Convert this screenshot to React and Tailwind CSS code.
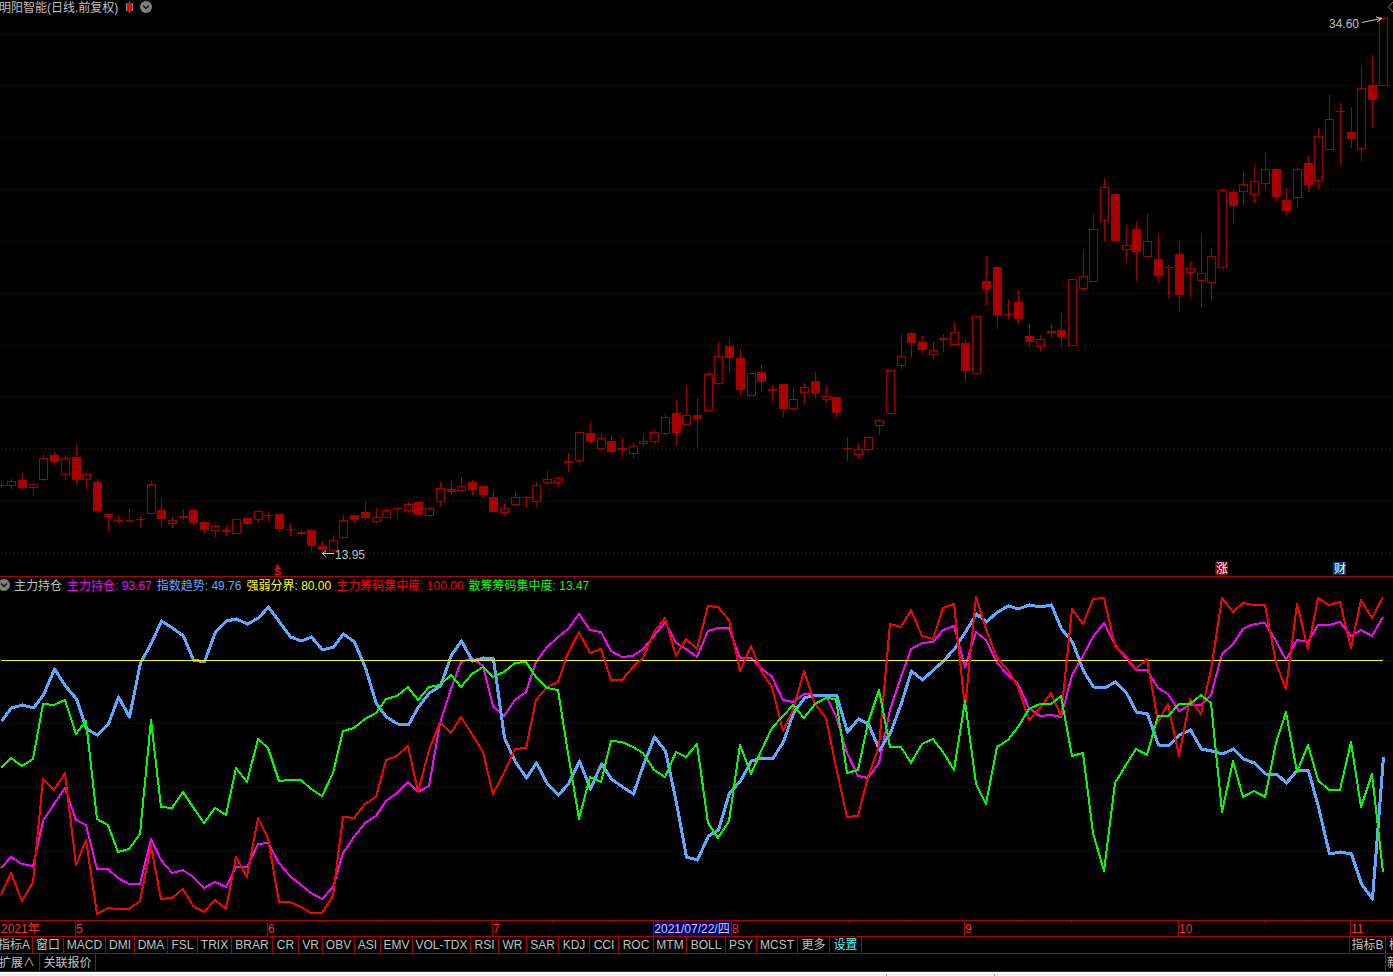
import React, { useState } from 'react';
import clsx from 'clsx';

const WIDTH = 1393;
const RED = '#a80000';

const barX = (i) => Math.floor(1 + i * 10.715);

// [high, bodyTop, bodyBottom, low, filled]
const CANDLES = [
    [481, 485, 486, 488, 1], [479, 481, 486, 489, 0], [473, 480, 488, 489, 1], [483, 484, 488, 496, 0], [455, 458, 480, 481, 0],
    [452, 455, 462, 466, 1], [455, 458, 475, 480, 0], [445, 457, 480, 485, 1], [473, 474, 480, 490, 0], [479, 482, 511, 513, 1],
    [513, 514, 517, 531, 0], [516, 520, 521, 524, 1], [509, 520, 521, 522, 1], [516, 519, 520, 528, 1], [481, 484, 514, 514, 0],
    [498, 510, 519, 526, 1], [517, 520, 524, 528, 0], [509, 516, 518, 520, 1], [508, 510, 523, 526, 1], [521, 522, 530, 534, 1],
    [524, 526, 531, 538, 0], [526, 530, 532, 536, 1], [519, 519, 534, 534, 0], [518, 518, 524, 526, 1], [510, 511, 520, 523, 0],
    [512, 515, 516, 522, 1], [514, 514, 529, 532, 1], [524, 529, 530, 536, 1], [529, 532, 534, 535, 1], [529, 530, 546, 551, 1],
    [541, 546, 550, 552, 1], [535, 540, 551, 552, 0], [515, 520, 538, 539, 0], [515, 515, 520, 523, 1], [502, 512, 518, 520, 1],
    [508, 517, 522, 523, 0], [508, 510, 518, 518, 0], [508, 508, 509, 518, 1], [502, 504, 511, 513, 0], [502, 502, 515, 516, 1],
    [507, 508, 516, 517, 0], [482, 488, 502, 506, 0], [480, 489, 492, 495, 1], [477, 486, 491, 491, 0], [480, 482, 490, 495, 1],
    [486, 486, 495, 499, 1], [491, 497, 512, 513, 1], [504, 508, 513, 516, 0], [491, 497, 505, 505, 0], [496, 497, 498, 508, 1],
    [482, 485, 502, 506, 0], [471, 479, 483, 485, 0], [477, 478, 483, 487, 0], [453, 461, 463, 472, 1], [432, 432, 461, 465, 0],
    [422, 433, 442, 443, 1], [433, 438, 449, 451, 0], [436, 441, 452, 453, 1], [438, 448, 450, 457, 1], [443, 446, 454, 458, 0],
    [434, 441, 444, 446, 0], [430, 432, 442, 444, 0], [414, 417, 434, 436, 0], [400, 413, 433, 446, 1], [386, 415, 425, 425, 0],
    [398, 415, 419, 448, 1], [372, 374, 411, 411, 0], [342, 356, 384, 385, 0], [338, 346, 358, 373, 1], [349, 358, 390, 396, 1],
    [373, 373, 396, 396, 0], [365, 372, 382, 391, 1], [385, 389, 391, 401, 1], [384, 384, 409, 417, 1], [387, 399, 409, 410, 0],
    [383, 387, 393, 404, 0], [372, 381, 393, 399, 1], [386, 396, 400, 403, 0], [397, 397, 413, 418, 1], [437, 448, 449, 461, 1],
    [444, 449, 455, 459, 0], [436, 437, 450, 452, 0], [420, 420, 426, 435, 0], [370, 370, 414, 414, 0], [334, 356, 366, 370, 0],
    [332, 333, 343, 358, 1], [336, 342, 350, 354, 1], [341, 350, 355, 359, 0], [334, 338, 340, 352, 1], [322, 332, 345, 345, 0],
    [339, 343, 371, 381, 1], [316, 316, 374, 375, 0], [256, 281, 289, 306, 1], [267, 267, 315, 329, 1], [299, 314, 315, 319, 1],
    [290, 302, 319, 324, 1], [324, 336, 342, 347, 1], [335, 339, 347, 351, 0], [324, 331, 333, 338, 1], [313, 330, 337, 347, 1],
    [279, 279, 346, 346, 0], [250, 276, 289, 292, 0], [214, 229, 282, 282, 0], [178, 187, 221, 241, 0], [193, 194, 241, 241, 1],
    [226, 245, 250, 262, 0], [221, 229, 252, 281, 1], [214, 241, 257, 257, 0], [234, 259, 276, 282, 1], [265, 267, 268, 298, 1],
    [241, 254, 295, 311, 1], [262, 268, 273, 297, 0], [234, 273, 281, 307, 0], [248, 256, 283, 301, 0], [189, 190, 268, 269, 0],
    [189, 192, 206, 223, 1], [171, 184, 192, 204, 0], [166, 181, 195, 203, 0], [152, 169, 184, 190, 0], [169, 169, 197, 202, 1],
    [188, 200, 211, 215, 1], [167, 169, 198, 208, 0], [156, 163, 185, 192, 1], [128, 136, 181, 189, 0], [95, 119, 150, 150, 0],
    [103, 111, 112, 166, 1], [107, 132, 139, 148, 1], [66, 88, 149, 161, 0], [55, 85, 100, 127, 1], [18, 18, 86, 86, 0],
];

const MAIN_FORCE = [
    868, 857, 864, 866, 821, 804, 788, 820, 825, 869, 869, 878, 884, 884, 839, 860, 873, 870, 877, 888,
    882, 887, 867, 867, 844, 843, 863, 876, 885, 893, 899, 887, 853, 837, 823, 816, 801, 793, 782, 792,
    786, 723, 689, 662, 658, 666, 706, 716, 700, 692, 662, 647, 637, 629, 614, 630, 632, 651, 657, 656,
    649, 636, 622, 643, 649, 657, 631, 628, 628, 658, 658, 668, 677, 700, 702, 694, 695, 696, 716, 753,
    776, 778, 763, 710, 677, 649, 643, 642, 630, 626, 667, 632, 640, 663, 675, 684, 708, 716, 715, 717,
    675, 656, 637, 623, 645, 658, 670, 670, 688, 694, 711, 705, 705, 695, 654, 644, 629, 624, 623, 641,
    660, 640, 642, 625, 625, 622, 636, 630, 636, 617,
];

const TREND = [
    721, 708, 705, 708, 695, 669, 686, 699, 729, 735, 724, 697, 717, 663, 643, 621, 628, 636, 660, 662,
    632, 621, 619, 624, 618, 607, 622, 637, 641, 637, 650, 647, 634, 642, 668, 704, 717, 724, 725, 707,
    693, 686, 655, 641, 661, 658, 659, 738, 762, 778, 763, 784, 795, 784, 761, 789, 764, 779, 787, 794,
    765, 737, 751, 803, 857, 860, 836, 830, 793, 781, 761, 758, 759, 742, 713, 698, 695, 695, 695, 732,
    719, 724, 750, 733, 703, 671, 680, 670, 661, 649, 632, 614, 622, 612, 606, 609, 605, 607, 605, 629,
    642, 671, 687, 688, 682, 693, 712, 714, 745, 746, 735, 730, 749, 751, 754, 749, 759, 763, 774, 774,
    783, 770, 771, 807, 854, 852, 854, 884, 899, 757,
];

const MAIN_CHIPS = [
    895, 873, 901, 882, 779, 790, 773, 865, 840, 914, 908, 909, 909, 901, 846, 899, 898, 889, 906, 912,
    900, 909, 857, 877, 818, 838, 902, 902, 907, 913, 913, 896, 817, 818, 804, 797, 760, 756, 746, 792,
    750, 722, 733, 717, 734, 752, 794, 773, 749, 748, 700, 687, 682, 653, 632, 653, 649, 680, 680, 667,
    658, 632, 618, 656, 639, 649, 606, 607, 620, 671, 646, 671, 687, 731, 710, 671, 704, 718, 767, 817,
    816, 777, 746, 624, 627, 610, 636, 639, 608, 604, 708, 597, 629, 658, 670, 687, 720, 708, 693, 716,
    609, 624, 599, 598, 646, 656, 669, 659, 722, 704, 756, 699, 714, 670, 598, 612, 603, 605, 605, 663,
    689, 604, 649, 598, 605, 602, 648, 600, 618, 597,
];

const RETAIL_CHIPS = [
    768, 758, 766, 759, 704, 705, 700, 734, 721, 819, 825, 852, 849, 834, 720, 807, 808, 792, 807, 823,
    808, 815, 768, 782, 739, 748, 781, 780, 780, 789, 796, 773, 731, 728, 719, 713, 699, 696, 687, 700,
    687, 685, 675, 687, 674, 667, 677, 672, 663, 662, 677, 688, 690, 753, 819, 777, 782, 741, 742, 747,
    753, 770, 777, 752, 757, 744, 823, 838, 821, 745, 774, 751, 728, 716, 705, 718, 704, 698, 699, 773,
    770, 723, 690, 747, 747, 763, 744, 739, 752, 770, 701, 784, 804, 747, 740, 727, 709, 704, 704, 696,
    756, 753, 833, 871, 783, 765, 749, 755, 716, 716, 704, 704, 695, 703, 812, 761, 797, 791, 797, 743,
    712, 772, 745, 780, 790, 790, 742, 807, 774, 872,
];

const LEGEND = [
    { label: '主力持仓', value: '93.67', color: 'text-[#ff00ff]' },
    { label: '指数趋势', value: '49.76', color: 'text-[#60a8ff]' },
    { label: '强弱分界', value: '80.00', color: 'text-[#ffff00]' },
    { label: '主力筹码集中度', value: '100.00', color: 'text-[#ff0000]' },
    { label: '散筹筹码集中度', value: '13.47', color: 'text-[#00ff00]' },
];

// span is the share of the axis that the month takes
const MONTHS = [
    { label: '5', span: 192 },
    { label: '6', span: 225 },
    { label: '7', span: 239 },
    { label: '8', span: 233 },
    { label: '9', span: 214 },
    { label: '10', span: 172 },
];

const INDICATORS = [
    { name: 'MACD', width: 'w-[42px]' },
    { name: 'DMI', width: 'w-[29px]' },
    { name: 'DMA', width: 'w-[33px]' },
    { name: 'FSL', width: 'w-[30px]' },
    { name: 'TRIX', width: 'w-[34px]' },
    { name: 'BRAR', width: 'w-[41px]' },
    { name: 'CR', width: 'w-[26px]' },
    { name: 'VR', width: 'w-[24px]' },
    { name: 'OBV', width: 'w-[32px]' },
    { name: 'ASI', width: 'w-[26px]' },
    { name: 'EMV', width: 'w-[32px]' },
    { name: 'VOL-TDX', width: 'w-[58px]' },
    { name: 'RSI', width: 'w-[28px]' },
    { name: 'WR', width: 'w-[28px]' },
    { name: 'SAR', width: 'w-[32px]' },
    { name: 'KDJ', width: 'w-[31px]' },
    { name: 'CCI', width: 'w-[29px]' },
    { name: 'ROC', width: 'w-[35px]' },
    { name: 'MTM', width: 'w-[33px]' },
    { name: 'BOLL', width: 'w-[39px]' },
    { name: 'PSY', width: 'w-[31px]' },
    { name: 'MCST', width: 'w-[41px]' },
    { name: '更多', width: 'w-[32px]' },
];

function GridLine({ y, from = 1 }) {
    return <line x1={from} x2={1390} y1={y + 0.5} y2={y + 0.5} stroke="#8c0c0c" strokeDasharray="1 3" />;
}

function Candle({ x, data }) {
    const [high, top, bottom, low, filled] = data;
    return (
        <g fill={RED}>
            {top > high && <rect x={x} y={high} width={1} height={top - high} />}
            {low > bottom && <rect x={x} y={bottom} width={1} height={low - bottom} />}
            {filled ? (
                <rect x={x - 4} y={top} width={9} height={bottom - top} />
            ) : (
                <rect x={x - 3.5} y={top + 0.5} width={8} height={bottom - top - 1} fill="#000000" stroke={RED} />
            )}
        </g>
    );
}

function Series({ values, color, width = 2 }) {
    const shift = width % 2 ? 0.5 : 0;
    const points = values.map((y, i) => `${barX(i) + shift},${y}`).join(' ');
    return <polyline points={points} fill="none" stroke={color} strokeWidth={width} strokeLinejoin="round" />;
}

function Badge({ x, text, fill }) {
    return (
        <g>
            <rect x={x} y={562} width={13} height={13} fill={fill} />
            <text x={x + 1} y={573} fontSize={12} fill="#ffffff">{text}</text>
        </g>
    );
}

function MenuDot({ label, className }) {
    return (
        <button aria-label={label} className={clsx('shrink-0', className)}>
            <svg viewBox="0 0 12 12" className="block h-3 w-3">
                <circle cx="6" cy="6" r="6" fill="#808080" />
                <path d="M3 4.5 6 7.5 9 4.5" fill="none" stroke="#101010" strokeWidth="1.4" />
            </svg>
        </button>
    );
}

function PriceChart() {
    return (
        <section className="border-b border-[#b00000]">
            <header className="flex h-4 items-center overflow-hidden pb-0.5">
                <h1 className="-ml-px pt-0.5 leading-4 whitespace-nowrap">明阳智能(日线.前复权)</h1>
                <svg viewBox="0 0 7 12" className="ml-2 h-3 w-[7px]" shapeRendering="crispEdges">
                    <path d="M3 0h1v12H3zM0 2h7v8H0z" fill="#808080" />
                    <path d="M1 2h5v8H1z" fill="#ff0000" />
                </svg>
                <MenuDot label="切换" className="ml-[7px]" />
                <svg viewBox="0 0 5 10" className="ml-auto h-2.5 w-[5px]">
                    <path d="M5 0 .5 5 5 10" fill="none" stroke="#808080" />
                </svg>
            </header>
            <svg viewBox={`0 16 ${WIDTH} 560`} className="block h-auto w-full">
                <g shapeRendering="crispEdges">
                    {[34, 85, 137, 189, 241, 293, 345, 396, 448, 500, 552].map((y) => (
                        <GridLine key={y} y={y} />
                    ))}
                    {CANDLES.map((data, i) => (
                        <Candle key={i} x={barX(i)} data={data} />
                    ))}
                </g>
                <g fill="none" stroke="#d0d0d0">
                    <path d="M334 553.5H322M326 550.5 322.5 553.5 326 557" />
                    <path d="M1362 22.5 1381 18.5M1376 17 1382 18.5 1377 22" />
                </g>
                <text x={335} y={559} fontSize={12} fill="#c0c0c0">13.95</text>
                <text x={1329} y={28} fontSize={12} fill="#c0c0c0">34.60</text>
                <path d="M277.5 564 280 567.5H275z" fill="#ff0000" />
                <path
                    d="M280.5 570C280 568.2 275.5 568 275.5 570 275.5 572 280.5 571 280.5 573 280.5 575 275.5 574.8 274.8 573.5"
                    fill="none"
                    stroke="#ff0000"
                    strokeWidth={1.6}
                />
                <Badge x={1215} text="涨" fill="#800000" />
                <Badge x={1333} text="财" fill="#003870" />
            </svg>
        </section>
    );
}

function IndicatorChart() {
    return (
        <section>
            <header className="flex h-4 items-center gap-[5px] overflow-hidden pt-0.5 whitespace-nowrap">
                <MenuDot label="指标菜单" className="mb-0.5 -ml-0.5 -mr-px" />
                <h2>主力持仓</h2>
                {LEGEND.map(({ label, value, color }) => (
                    <span key={label} className={color}>{label}: {value}</span>
                ))}
            </header>
            <svg viewBox={`0 593 ${WIDTH} 327`} className="block h-auto w-full" shapeRendering="crispEdges">
                <GridLine y={660} from={1385} />
                <GridLine y={723} />
                <GridLine y={787} />
                <GridLine y={851} />
                <Series values={MAIN_FORCE} color="#ff00ff" />
                <Series values={TREND} color="#60a8ff" width={3} />
                <rect x={1} y={660} width={1382} height={1} fill="#ffff00" />
                <Series values={MAIN_CHIPS} color="#ff0000" />
                <Series values={RETAIL_CHIPS} color="#00ff00" />
            </svg>
        </section>
    );
}

function Month({ label, span }) {
    return (
        <div className="flex shrink-0 border-l border-[#b00000]" style={{ width: `${(span / WIDTH) * 100}%` }}>
            <span className="w-0 flex-1">{label}</span>
            {[1, 2, 3].map((n) => (
                <i key={n} className="h-0.5 w-0 flex-1 border-l border-[#b00000]" />
            ))}
        </div>
    );
}

function DateAxis() {
    return (
        <div className="relative flex h-4 border-t border-[#b00000] leading-4 text-[#ff3232]">
            <div className="shrink-0 pl-px whitespace-nowrap" style={{ width: `${(75 / WIDTH) * 100}%` }}>2021年</div>
            {MONTHS.map((month) => (
                <Month key={month.label} {...month} />
            ))}
            <div className="flex-1 border-l border-[#b00000]">11</div>
            <time className="absolute top-0 left-[46.9%] h-[15px] w-[79px] overflow-hidden border-x border-[#b00000] bg-[#000080] leading-4 whitespace-nowrap text-[#d0d0d0]">
                2021/07/22/四
            </time>
        </div>
    );
}

function Tab({ children, className, ...props }) {
    return (
        <button
            className={clsx('h-full shrink-0 border-r border-[#b00000] whitespace-nowrap', className)}
            {...props}
        >
            {children}
        </button>
    );
}

function App() {
    const [active, setActive] = useState('MACD');

    return (
        <main className="w-full overflow-hidden bg-black font-['Liberation_Sans','Noto_Sans_CJK_SC',sans-serif] text-xs leading-4 text-[#c0c0c0]">
            <PriceChart />
            <IndicatorChart />
            <DateAxis />
            <nav className="flex h-[17px] overflow-hidden border-t border-[#b00000]">
                <Tab className="-ml-1 w-[37px]">指标A</Tab>
                <Tab className="w-[31px]">窗口</Tab>
                {INDICATORS.map(({ name, width }) => (
                    <Tab key={name} className={width} aria-pressed={active === name} onClick={() => setActive(name)}>
                        {name}
                    </Tab>
                ))}
                <Tab className="w-[32px] text-[#54fcfc]">设置</Tab>
                <div className="ml-auto flex w-11 shrink-0 overflow-hidden border-l border-[#b00000]">
                    <Tab className="w-9">指标B</Tab>
                    <Tab className="px-[3px]">模板</Tab>
                </div>
            </nav>
            <nav className="flex h-[19px] overflow-hidden border-y border-[#b00000]">
                <Tab className="-ml-1 w-11 pr-px">扩展∧</Tab>
                <Tab className="w-14">关联报价</Tab>
                <div className="ml-auto flex w-2 shrink-0 overflow-hidden border-l border-[#b00000]">
                    <Tab className="px-px">新闻</Tab>
                </div>
            </nav>
            <footer className="flex h-1 border-t-2 border-white bg-[#f0f0f0]">
                <i className="w-[63.6%]" />
                <i className="w-[109px] border-x border-[#a0a0a0]" />
            </footer>
        </main>
    );
}

export default App;
